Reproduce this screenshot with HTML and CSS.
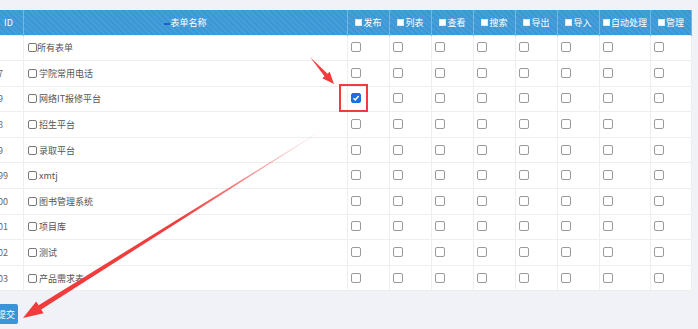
FILE: index.html
```html
<!DOCTYPE html>
<html lang="zh-CN">
<head>
    <meta charset="UTF-8">
    <meta name="viewport" content="width=device-width, initial-scale=1.0">
    <title>表单权限</title>
    <link rel="stylesheet" href="styles.css">
</head>
<body>
    <div class="quanxian">
        <table class="tabela">
            <colgroup>
                <col class="c_id">
                <col class="c_nome">
                <col class="c_p"><col class="c_p"><col class="c_p"><col class="c_p"><col class="c_p"><col class="c_p">
                <col class="c_auto">
                <col class="c_p2">
            </colgroup>
            <thead>
                <tr>
                    <th>ID</th>
                    <th><span class="marca"></span>表单名称</th>
                    <th><span class="cb_h"></span>发布</th>
                    <th><span class="cb_h"></span>列表</th>
                    <th><span class="cb_h"></span>查看</th>
                    <th><span class="cb_h"></span>搜索</th>
                    <th><span class="cb_h"></span>导出</th>
                    <th><span class="cb_h"></span>导入</th>
                    <th><span class="cb_h"></span>自动处理</th>
                    <th><span class="cb_h"></span>管理</th>
                </tr>
            </thead>
            <tbody id="linhas"></tbody>
        </table>
        <button class="botao">提交</button>
    </div>

    <svg class="setas" width="698" height="329" viewBox="0 0 698 329">
        <defs>
            <linearGradient id="fade" gradientUnits="userSpaceOnUse" x1="332" y1="124" x2="180" y2="220">
                <stop offset="0" stop-color="#f03c3c" stop-opacity="0.1"/>
                <stop offset="1" stop-color="#f03c3c" stop-opacity="1"/>
            </linearGradient>
        </defs>
        <polygon points="310,57 327.5,73.7 329.7,71.7 334,84 322.3,78.3 324.5,76.3" fill="#f03c3c"/>
        <rect x="340" y="85" width="27" height="26" fill="none" stroke="#f03c3c" stroke-width="2"/>
        <polygon points="332,124 38.6,305.3 36.2,301.5 23,318 43.6,313.3 41.2,309.5" fill="url(#fade)"/>
    </svg>

    <script>
        //dados das linhas
        const formularios = [
            ['', '所有表单', true],
            ['97', '学院常用电话'],
            ['79', '网络IT报修平台'],
            ['78', '招生平台'],
            ['89', '录取平台'],
            ['199', 'xmtj'],
            ['200', '图书管理系统'],
            ['201', '项目库'],
            ['202', '测试'],
            ['203', '产品需求表']
        ];
        const corpo = document.getElementById('linhas');

        formularios.forEach(function(f, i) {
            let html = '<td class="id">' + f[0] + '</td>';
            html += '<td class="nome"><span class="cb"></span>' + (f[2] ? '' : ' ') + f[1] + '</td>';
            for (let c = 0; c < 8; c++) {
                let marcado = (i === 2 && c === 0);
                html += '<td class="perm"><span class="cb' + (marcado ? ' on' : '') + '">' +
                    (marcado ? '<svg width="8" height="8" viewBox="0 0 8 8"><path d="M1.5 4.2 L3.3 6 L6.6 2" fill="none" stroke="#fff" stroke-width="1.5"/></svg>' : '') +
                    '</span></td>';
            }
            const tr = document.createElement('tr');
            tr.innerHTML = html;
            corpo.appendChild(tr);
        });
    </script>
</body>
</html>
```

FILE: styles.css
```css
* {
    margin: 0;
    padding: 0;
    box-sizing: border-box;
}
body {
    background-color: #f1f2f7;
    font-family: "Noto Sans CJK SC", "Liberation Sans", sans-serif;
    font-size: 9px;
    color: #555;
    width: 698px;
    height: 329px;
    overflow: hidden;
    position: relative;
}
.quanxian {
    padding-top: 10px;
    margin-left: -14px;
}
.tabela {
    width: 705px;
    table-layout: fixed;
    border-collapse: collapse;
    background-color: white;
}
.c_id { width: 37px; }
.c_nome { width: 324px; }
.c_p { width: 42px; }
.c_auto { width: 51px; }
.c_p2 { width: 41px; }
.tabela th {
    height: 25px;
    background: #3a97d5 repeating-linear-gradient(45deg, rgba(255,255,255,0.07) 0 2px, transparent 2px 4px);
    color: white;
    font-weight: normal;
    text-align: center;
    white-space: nowrap;
    border-left: 1px solid #74b6e4;
    border-right: 1px solid #74b6e4;
}
.tabela th:first-child {
    text-align: left;
    padding-left: 17px;
}
.tabela td {
    height: 25.6px;
    border: 1px solid #eeeeee;
    white-space: nowrap;
    overflow: hidden;
    vertical-align: middle;
}
.tabela td.id {
    padding-left: 6px;
    color: #666;
}
.tabela td.nome {
    padding-left: 4px;
}
.tabela td.perm {
    padding-left: 3px;
}
.cb {
    display: inline-block;
    width: 10px;
    height: 10px;
    border: 1px solid #9a9a9a;
    border-radius: 2px;
    background-color: white;
    vertical-align: -1px;
}
.nome .cb {
    width: 9px;
    height: 9px;
    border-color: #777;
}
.cb.on {
    background-color: #1a6fe3;
    border-color: #1a6fe3;
}
.cb.on svg {
    display: block;
    margin: 0 0 0 0;
}
.cb_h {
    display: inline-block;
    width: 7px;
    height: 7px;
    background-color: white;
    border: 1px solid #e6e6e6;
    margin-right: 1px;
}
.marca {
    display: inline-block;
    width: 6px;
    height: 2px;
    background-color: #1c5fd1;
    vertical-align: 1px;
}
.botao {
    margin-top: 13px;
    margin-left: 8px;
    height: 20px;
    padding: 0 3px;
    background-color: #3a94d8;
    border: none;
    border-radius: 2px;
    color: white;
    font-family: "Noto Sans CJK SC", sans-serif;
    font-size: 9px;
    cursor: pointer;
}
.setas {
    position: absolute;
    top: 0;
    left: 0;
    pointer-events: none;
}
```
